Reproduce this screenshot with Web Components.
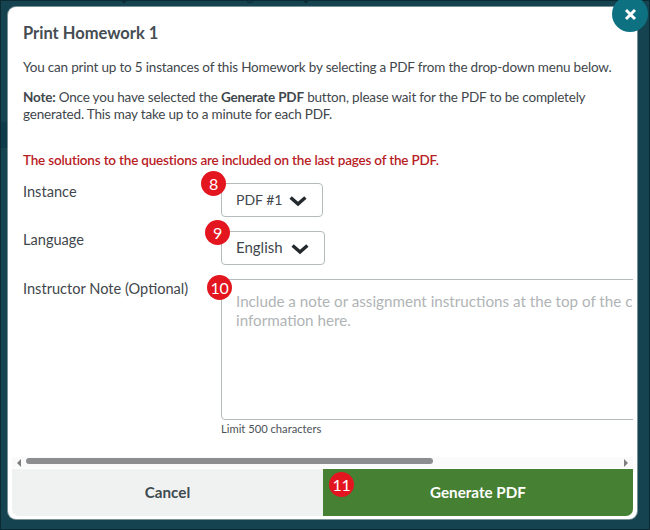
<!DOCTYPE html>
<html>
<head>
<meta charset="utf-8">
<title>Print Homework 1</title>
<style>
html, body { margin: 0; height: 530px; overflow: hidden; background: #15434f; }
body {
    font-family: Lato, "Open Sans", sans-serif;
    box-sizing: border-box;
    padding: 7px 13px 11px 8px;
    box-shadow: inset 0 0 0 1px #0b2a33;
}
</style>
</head>
<body>
<page-behind></page-behind>
<print-modal>
  <span slot="title">Print Homework 1</span>
  <p>You can print up to 5 instances of this Homework by selecting a PDF from the drop-down menu below.</p>
  <p><b>Note:</b> Once you have selected the <b>Generate PDF</b> button, please wait for the PDF to be completely<br>generated. This may take up to a minute for each PDF.</p>
  <p>The solutions to the questions are included on the last pages of the PDF.</p>
  <form-row label="Instance" top="0" height="48"><drop-down value="PDF #1" badge="8" w="102" fs="14" tw="45" bx="-20" by="-12"></drop-down></form-row>
  <form-row label="Language" top="0" height="48"><drop-down value="English" badge="9" w="104" fs="15" tw="47" bx="-16" by="-11"></drop-down></form-row>
  <form-row label="Instructor Note (Optional)" top="1"><note-box badge="10"></note-box></form-row>
</print-modal>

<script>
// what little shows of the page under the overlay
class PageBehind extends HTMLElement{
    connectedCallback(){
        this.attachShadow({ mode: "open" });
        this.shadowRoot.innerHTML = `
        <style>
        :host{ position: absolute; left: 0; top: 0; width: 650px; height: 530px; overflow: hidden; display: block; }
        .nav{
            position: absolute; left: 27px; top: -13px;
            display: flex; gap: 10px;
            align-items: center;
            font-size: 13.5px; line-height: 18px; color: #0b2a33;
        }
        .nav span:nth-of-type(2){ margin-left: 40px; }
        .band{ position: absolute; left: 1px; top: 122px; width: 7px; height: 26px; background: #0f3a49; }
        </style>
        <div class="nav">
            <span>Class Content</span>
            <svg width="10" height="18" viewBox="0 0 10 18"><path d="M1 11 L5 15 L9 11" fill="none" stroke="#0b2a33" stroke-width="2"/></svg>
            <span>Class Management</span>
            <svg width="10" height="18" viewBox="0 0 10 18"><path d="M1 11 L5 15 L9 11" fill="none" stroke="#0b2a33" stroke-width="2"/></svg>
        </div>
        <div class="band"></div>`;
    }
}

// little numbered red marker, sits over the control it belongs to
class NumBadge extends HTMLElement{
    connectedCallback(){
        this.attachShadow({ mode: "open" });
        this.shadowRoot.innerHTML = `
        <style>
        :host{
            position: absolute;
            width: 25px;
            height: 25px;
            border-radius: 50%;
            background: #e3161f;
            color: #fff;
            font-size: 16px;
            font-weight: 400;
            letter-spacing: -0.3px;
            line-height: 25px;
            text-align: center;
            display: block;
        }
        </style><slot></slot>`;
    }
}

class DropDown extends HTMLElement{
    connectedCallback(){
        this.attachShadow({ mode: "open" });
        this.shadowRoot.innerHTML = `
        <style>
        :host{ display: block; position: relative; }
        .box{
            box-sizing: border-box;
            width: ${this.getAttribute("w")}px;
            height: 34px;
            border: 1px solid #b5bbbb;
            border-radius: 4px;
            display: flex;
            align-items: center;
            padding-left: 14px;
            gap: 8px;
            font-size: ${this.getAttribute("fs")}px;
            color: #3f474c;
        }
        span{ width: ${this.getAttribute("tw")}px; white-space: nowrap; padding-bottom: 2px; }
        num-badge{ left: ${this.getAttribute("bx")}px; top: ${this.getAttribute("by")}px; }
        svg{ display: block; margin-top: 2px; }
        </style>
        <div class="box">
            <span>${this.getAttribute("value")}</span>
            <svg width="18" height="12" viewBox="0 0 18 12"><path d="M1.6 2.4 L9 9 L16.4 2.4" fill="none" stroke="#23292d" stroke-width="3.4"/></svg>
        </div>
        <num-badge>${this.getAttribute("badge")}</num-badge>`;
    }
}

class NoteBox extends HTMLElement{
    connectedCallback(){
        this.attachShadow({ mode: "open" });
        this.shadowRoot.innerHTML = `
        <style>
        :host{ display: block; position: relative; width: 560px; }
        .area{
            box-sizing: border-box;
            height: 141px;
            border: 1px solid #b5bbbb;
            border-radius: 4px;
            padding: 12px 14px;
            font-size: 15.2px;
            line-height: 19px;
            color: #b0b4b6;
            white-space: nowrap;
        }
        .limit{ font-size: 11.2px; color: #4a5257; margin-top: 2px; line-height: 14px; }
        num-badge{ left: -14px; top: -4px; }
        </style>
        <div class="area">Include a note or assignment instructions at the top of the c<br>information here.</div>
        <div class="limit">Limit 500 characters</div>
        <num-badge>${this.getAttribute("badge")}</num-badge>`;
    }
}

class FormRow extends HTMLElement{
    connectedCallback(){
        this.attachShadow({ mode: "open" });
        let h = this.getAttribute("height");
        this.shadowRoot.innerHTML = `
        <style>
        :host{
            display: grid;
            grid-template-columns: 198px 1fr;
            ${h ? "height:" + h + "px;" : ""}
            font-size: 14.6px;
            letter-spacing: 0;
            color: #3f474c;
        }
        .lab{ line-height: 18px; padding-top: ${this.getAttribute("top")}px; white-space: nowrap; }
        </style>
        <div class="lab">${this.getAttribute("label")}</div>
        <div><slot></slot></div>`;
    }
}

class ScrollBar extends HTMLElement{
    connectedCallback(){
        this.attachShadow({ mode: "open" });
        this.shadowRoot.innerHTML = `
        <style>
        :host{
            display: flex;
            position: relative;
            align-items: center;
            height: 11px;
            background: #fafafa;
            padding: 0 5px;
            justify-content: space-between;
        }
        .thumb{ position: absolute; left: 14px; top: 1px; width: 407px; height: 6px; border-radius: 3px; background: #8b8d8e; }
        i{ width: 0; height: 0; border: 4px solid transparent; }
        .l{ border-right: 4px solid #7d7f80; border-left: 0; }
        .r{ border-left: 4px solid #7d7f80; border-right: 0; }
        </style>
        <i class="l"></i><div class="thumb"></div><i class="r"></i>`;
    }
}

class PrintModal extends HTMLElement{
    connectedCallback(){
        this.attachShadow({ mode: "open" });
        this.shadowRoot.innerHTML = `
        <style>
        :host{
            display: block;
            position: relative;
            height: 100%;
            box-sizing: border-box;
            background: #fff;
            border-radius: 8px;
            padding: 0 4px 3px;
            color: #3f474c;
            font-size: 13.5px;
            letter-spacing: -0.19px;
            box-shadow: 0 0 0 1px rgba(205,210,210,.55);
        }
        .wrap{ height: 100%; display: flex; flex-direction: column; }
        .body{
            flex: 1;
            overflow: hidden;
            position: relative;
            padding: 0 11px;
        }
        h2{
            font-size: 16.5px;
            font-weight: 700;
            letter-spacing: 0;
            color: #454d52;
            margin: 16px 0 0;
            line-height: 20px;
        }
        .actions{ display: grid; grid-template-columns: 311px 310px; height: 47px; margin-top: 1px; letter-spacing: 0; }
        .actions div{
            display: flex; align-items: center; justify-content: center;
            box-sizing: border-box;
            padding-bottom: 1px;
            font-size: 15.2px; font-weight: 700;
        }
        .cancel{ background: #f0f2f2; color: #3f4a50; border-bottom-left-radius: 7px; }
        .go{ background: #468032; color: #fff; border-bottom-right-radius: 7px; position: relative; }
        .go num-badge{ left: 6px; top: 3px; }
        .close{
            position: absolute; right: -11px; top: -11px;
            width: 36px; height: 36px; border-radius: 50%;
            background: #0e7182;
            display: flex; align-items: center; justify-content: center;
        }
        </style>
        <div class="wrap">
            <div class="body">
                <h2><slot name="title"></slot></h2>
                <slot></slot>
            </div>
            <scroll-bar></scroll-bar>
            <div class="actions">
                <div class="cancel">Cancel</div>
                <div class="go">Generate PDF<num-badge>11</num-badge></div>
            </div>
        </div>
        <div class="close">
            <svg width="13" height="13" viewBox="0 0 13 13"><path d="M2 2 L11 11 M11 2 L2 11" stroke="#fff" stroke-width="3" fill="none"/></svg>
        </div>`;
    }
}

customElements.define("page-behind", PageBehind);
customElements.define("num-badge", NumBadge);
customElements.define("drop-down", DropDown);
customElements.define("note-box", NoteBox);
customElements.define("form-row", FormRow);
customElements.define("scroll-bar", ScrollBar);
customElements.define("print-modal", PrintModal);

// paragraph spacing lives on the slotted light DOM, needs setting from here
document.querySelectorAll("print-modal p").forEach((p, i) => {
    p.style.margin = ["16px 0 0", "13px 0 0", "29px 0 14px"][i];
    p.style.lineHeight = "17px";
    if (i == 2) { p.style.color = "#b8201f"; p.style.fontWeight = "600"; }
});
</script>
</body>
</html>
